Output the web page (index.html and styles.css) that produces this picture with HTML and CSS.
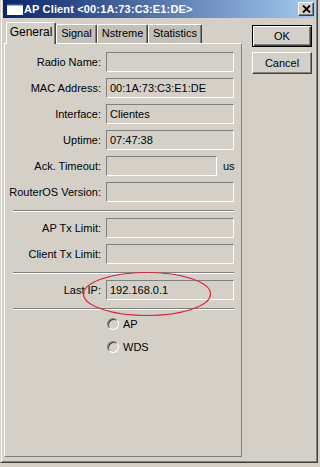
FILE: index.html
```html
<!DOCTYPE html>
<html lang="es">
<head>
    <meta charset="UTF-8">
    <meta name="viewport" content="width=device-width, initial-scale=1.0">
    <title>AP Client</title>
    <link rel="stylesheet" href="styles.css">
</head>
<body>
    <div class="window">
        <div class="titlebar">
            <svg class="title-icon" width="16" height="11" viewBox="0 0 16 11">
                <rect x="0" y="0" width="16" height="11" fill="#ffffff"/>
                <rect x="0" y="0" width="16" height="1.5" fill="#3a5a9a"/>
            </svg>
            <span class="title-text">AP Client &lt;00:1A:73:C3:E1:DE&gt;</span>
            <button class="close-btn">
                <svg width="9" height="8" viewBox="0 0 9 8">
                    <path d="M1 0.5 L8 7.5 M8 0.5 L1 7.5" stroke="#000" stroke-width="1.8" fill="none"/>
                </svg>
            </button>
        </div>

        <div class="client">
            <div class="main">
                <div class="tabs">
                    <div class="tab active">General</div>
                    <div class="tab">Signal</div>
                    <div class="tab">Nstreme</div>
                    <div class="tab">Statistics</div>
                </div>

                <div class="panel">
                    <div class="field">
                        <label>Radio Name:</label>
                        <div class="input"></div>
                    </div>
                    <div class="field">
                        <label>MAC Address:</label>
                        <div class="input">00:1A:73:C3:E1:DE</div>
                    </div>
                    <div class="field">
                        <label>Interface:</label>
                        <div class="input">Clientes</div>
                    </div>
                    <div class="field">
                        <label>Uptime:</label>
                        <div class="input">07:47:38</div>
                    </div>
                    <div class="field with-unit">
                        <label>Ack. Timeout:</label>
                        <div class="input"></div>
                        <span class="unit">us</span>
                    </div>
                    <div class="field">
                        <label>RouterOS Version:</label>
                        <div class="input"></div>
                    </div>

                    <div class="separator"></div>

                    <div class="field">
                        <label>AP Tx Limit:</label>
                        <div class="input"></div>
                    </div>
                    <div class="field">
                        <label>Client Tx Limit:</label>
                        <div class="input"></div>
                    </div>

                    <div class="separator"></div>

                    <div class="field">
                        <label>Last IP:</label>
                        <div class="input">192.168.0.1</div>
                    </div>

                    <div class="separator"></div>

                    <div class="radios">
                        <div class="radio"><span class="radio-dot"></span>AP</div>
                        <div class="radio"><span class="radio-dot"></span>WDS</div>
                    </div>
                </div>
            </div>

            <div class="side">
                <button class="btn default">OK</button>
                <button class="btn">Cancel</button>
            </div>
        </div>

        <!-- marca roja alrededor de Last IP -->
        <svg class="highlight" width="130" height="46" viewBox="0 0 130 46">
            <ellipse cx="65" cy="23" rx="63.5" ry="21.5" fill="none" stroke="#dc1e3c" stroke-width="1.2"/>
        </svg>
    </div>
</body>
</html>
```

FILE: styles.css
```css
:root {
    --face: #d4d0c8;
    --light: #ffffff;
    --shadow: #808080;
    --dark: #404040;
    --tab-off: #c3c0b9;
}

body {
    margin: 0;
    background: var(--face);
    font-family: 'Liberation Sans', Arial, sans-serif;
    font-size: 11px;
    color: #000;
}

.window {
    position: relative;
    width: 318px;
    height: 463px;
    box-sizing: border-box;
    border-left: 1px solid var(--face);
    border-right: 1px solid var(--dark);
    border-bottom: 1px solid var(--dark);
    padding: 0 2px 2px 2px;
    box-shadow: inset 1px 0 var(--light), inset -1px -1px var(--shadow);
    background: var(--face);
}

.titlebar {
    display: flex;
    align-items: center;
    height: 18px;
    padding: 0 1px 0 4px;
    background: linear-gradient(to right, #0a246a, #a6caf0);
    color: #fff;
}

.title-icon {
    display: block;
    margin-right: 1px;
}

.title-text {
    font-weight: bold;
    font-size: 11px;
    letter-spacing: 0.15px;
}

.close-btn {
    margin-left: auto;
    width: 16px;
    height: 14px;
    padding: 0;
    box-sizing: border-box;
    display: flex;
    align-items: center;
    justify-content: center;
    background: var(--face);
    border: 1px solid;
    border-color: var(--light) var(--dark) var(--dark) var(--light);
    box-shadow: inset -1px -1px var(--shadow);
}

.close-btn svg {
    display: block;
}

.client {
    display: flex;
    padding: 4px 0 0 1px;
}

.main {
    width: 238px;
}

.tabs {
    display: flex;
    align-items: flex-end;
    height: 21px;
    padding-left: 2px;
}

.tab {
    box-sizing: border-box;
    height: 19px;
    line-height: 17px;
    text-align: center;
    background: var(--tab-off);
    border-top: 1px solid var(--light);
    border-left: 1px solid var(--light);
    border-right: 1px solid var(--dark);
    box-shadow: inset -1px 0 var(--shadow);
    border-radius: 2px 2px 0 0;
}

.tab:nth-child(1) { width: 50px; }
.tab:nth-child(2) { width: 41px; }
.tab:nth-child(3) { width: 51px; }
.tab:nth-child(4) { width: 54px; }

.tab.active {
    position: relative;
    z-index: 1;
    height: 22px;
    line-height: 19px;
    margin-bottom: -1px;
    background: var(--face);
    font-size: 12px;
}

.panel {
    height: 414px;
    box-sizing: border-box;
    border-top: 1px solid var(--light);
    border-left: 1px solid var(--light);
    border-right: 1px solid var(--shadow);
    border-bottom: 1px solid var(--shadow);
    padding-top: 8px;
    display: flex;
    flex-direction: column;
    gap: 6px;
}

.field {
    display: grid;
    grid-template-columns: 96px 128px;
    column-gap: 5px;
    align-items: center;
    height: 20px;
}

.field.with-unit {
    grid-template-columns: 96px 111px auto;
}

.field label {
    text-align: right;
}

.input {
    box-sizing: border-box;
    height: 20px;
    line-height: 18px;
    padding: 0 3px;
    border: 1px solid;
    border-color: var(--shadow) var(--light) var(--light) var(--shadow);
    white-space: nowrap;
}

.unit {
    margin-left: 1px;
}

.separator {
    width: 221px;
    margin: 2px 0 0 8px;
    border-top: 1px solid var(--shadow);
    border-bottom: 1px solid var(--light);
}

.radios {
    display: flex;
    flex-direction: column;
    gap: 7px;
    padding-left: 102px;
}

.radio {
    display: flex;
    align-items: center;
    gap: 4px;
    height: 16px;
}

.radio-dot {
    width: 12px;
    height: 12px;
    box-sizing: border-box;
    border-radius: 50%;
    border: 1px solid;
    border-color: var(--shadow) var(--light) var(--light) var(--shadow);
    box-shadow: inset 1px 1px var(--dark);
    background: var(--face);
}

.side {
    display: flex;
    flex-direction: column;
    gap: 5px;
    margin: 3px 0 0 10px;
}

.btn {
    width: 60px;
    height: 22px;
    box-sizing: border-box;
    padding: 0;
    font: inherit;
    color: #000;
    background: var(--face);
    border: 1px solid;
    border-color: var(--light) var(--dark) var(--dark) var(--light);
    box-shadow: inset -1px -1px var(--shadow);
}

.btn.default {
    border-color: #000;
    box-shadow: inset 1px 1px var(--light), inset -1px -1px var(--dark), inset -2px -2px var(--shadow);
}

.highlight {
    position: absolute;
    left: 81px;
    top: 271px;
    pointer-events: none;
}
```
